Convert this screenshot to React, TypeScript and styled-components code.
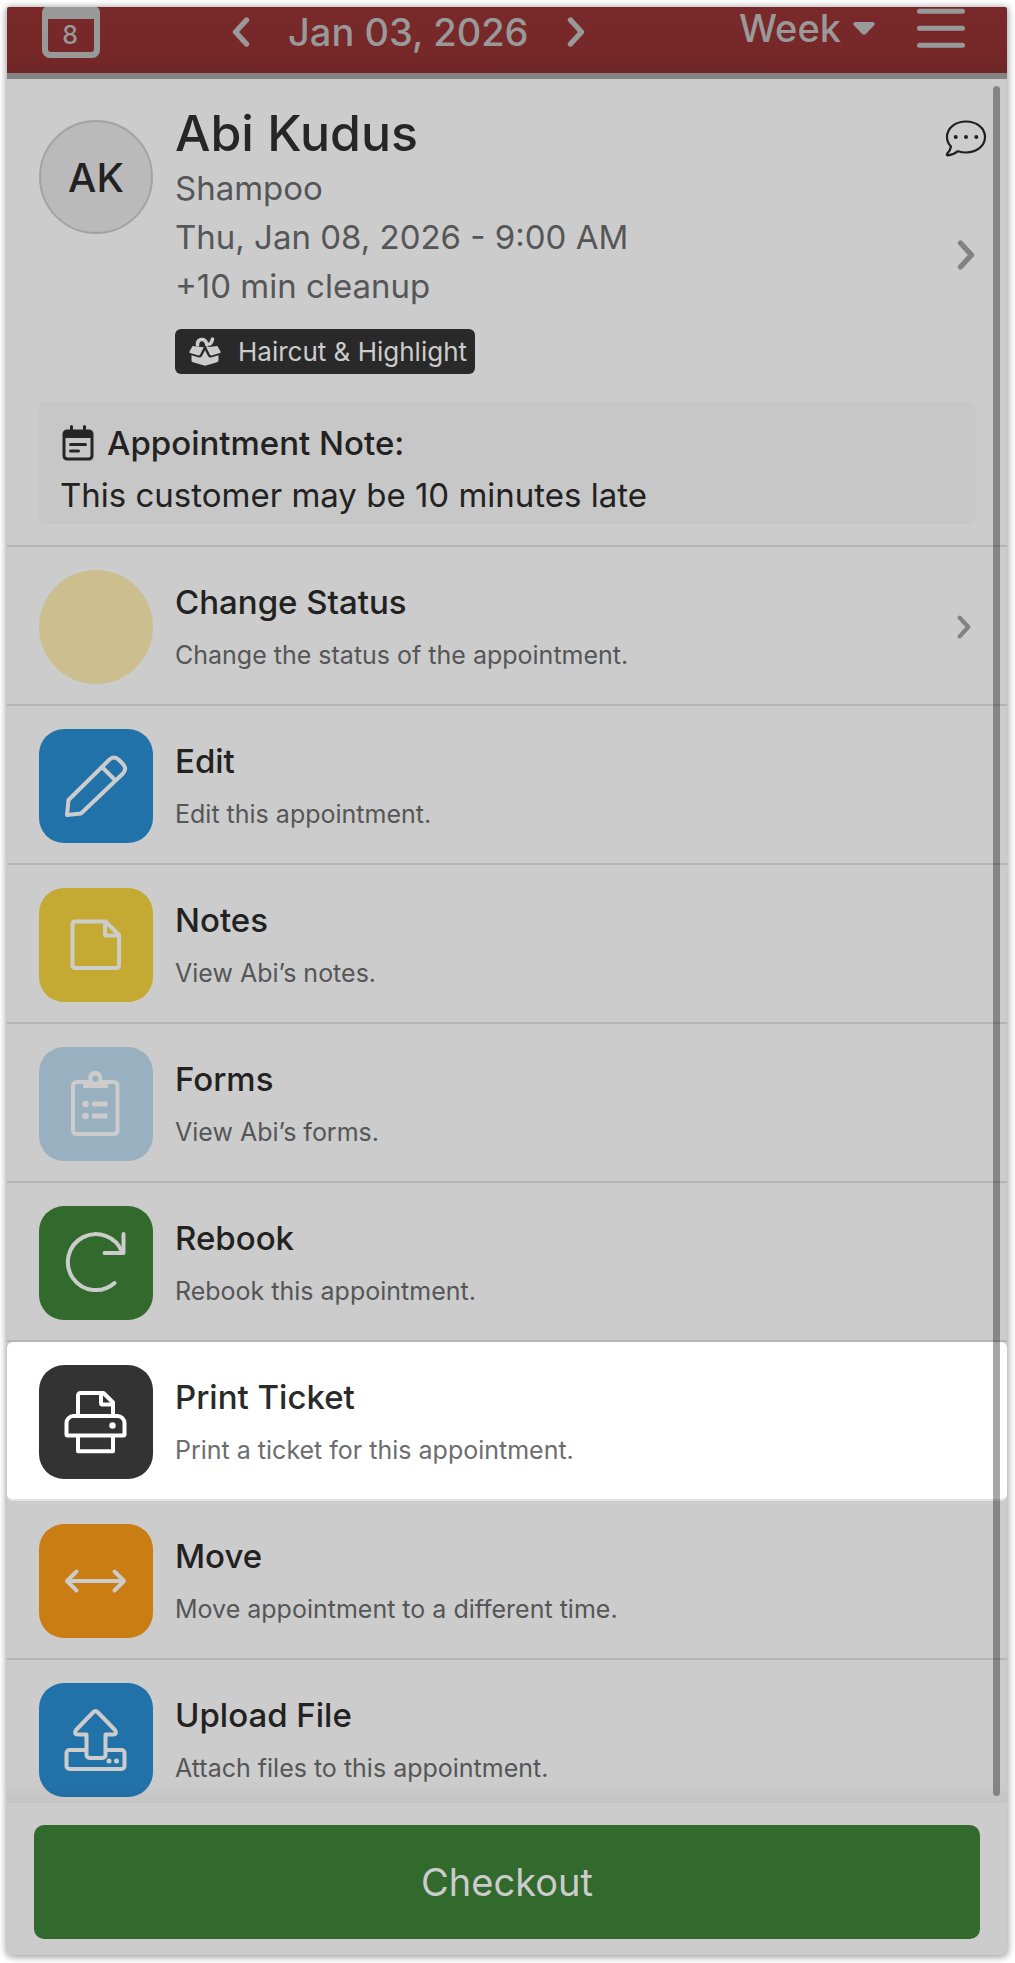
import React from "react";
import styled, { createGlobalStyle } from "styled-components";

const GlobalStyle = createGlobalStyle`
  *, *::before, *::after { box-sizing: border-box; }
  body {
    margin: 0;
    background: #ffffff;
    color: #222222;
    font-family: Inter, "Open Sans", "Liberation Sans", sans-serif;
    font-size: 33px;
    line-height: 49px;
  }
  h1, h2, p, ul { margin: 0; padding: 0; font: inherit; }
  svg { display: block; flex: none; }
`;

const ghostButton = `
  border: 0;
  padding: 0;
  margin: 0;
  background: none;
  color: inherit;
  font: inherit;
  cursor: pointer;
`;

const Frame = styled.div`
  position: relative;
  display: flex;
  flex-direction: column;
  margin: 7px 8px 8px 7px;
  background: #cccccc;
  border-radius: 2px 2px 6px 6px;
  box-shadow: 0 1px 7px 1px rgba(0, 0, 0, 0.4);
`;

const Header = styled.header`
  display: flex;
  align-items: flex-start;
  height: 72px;
  padding: 0 42px 0 35px;
  background: linear-gradient(#792929, #762828 70%, #6f2525);
  border-bottom: 6px solid #838383;
  border-radius: 2px 2px 0 0;
  color: #999999;
  font-size: 38px;
  font-weight: 500;
  line-height: 42px;
`;

const IconButton = styled.button`
  ${ghostButton}
  display: block;
`;

const DateNav = styled.nav`
  display: flex;
  align-items: center;
  gap: 38px;
  margin-left: 132px;
  padding-top: 4px;
`;

const HeaderRight = styled.div`
  display: flex;
  align-items: flex-start;
  gap: 42px;
  margin-left: auto;
`;

const WeekButton = styled.button`
  ${ghostButton}
  display: flex;
  align-items: center;
  gap: 12px;
`;

const Profile = styled.section`
  padding: 24px 31px 21px 32px;
  border-bottom: 2px solid #b5b5b5;
`;

const Person = styled.div`
  display: flex;
  align-items: flex-start;
  gap: 22px;
`;

const Avatar = styled.div`
  flex: none;
  display: grid;
  place-items: center;
  width: 114px;
  height: 114px;
  margin-top: 17px;
  border: 2px solid #a3a3a3;
  border-radius: 50%;
  background: #bababa;
  font-size: 40px;
  font-weight: 500;
`;

const PersonText = styled.div`
  flex: 1;
  min-width: 0;
  color: #555657;
`;

const Name = styled.h1`
  && {
    font-size: 50px;
    font-weight: 500;
    line-height: 61px;
  }
  color: #262626;
`;

const Package = styled.span`
  display: inline-flex;
  align-items: center;
  gap: 17px;
  height: 45px;
  margin-top: 18px;
  padding: 0 8px 0 14px;
  border-radius: 6px;
  background: #292929;
  color: #cccccc;
  font-size: 26px;
  line-height: 43px;
  vertical-align: top;
`;

const PersonActions = styled.div`
  display: flex;
  flex-direction: column;
  align-items: center;
  gap: 83px;
  padding-top: 17px;
  margin-right: -11px;
`;

const Note = styled.div`
  margin-top: 28px;
  padding: 15px 21px 3px;
  border-radius: 6px;
  background: #c7c7c7;
  line-height: 52px;
`;

const NoteTitle = styled.h2`
  display: flex;
  align-items: center;
  gap: 13px;
  && {
    padding-left: 2px;
    font-weight: 500;
  }
`;

const Actions = styled.ul`
  list-style: none;
`;

const ActionItem = styled.li<{ $active?: boolean }>`
  border-bottom: 2px solid ${(p) => (p.$active ? "#e2e2e2" : "#b5b5b5")};
  border-radius: ${(p) => (p.$active ? "6px" : "0")};
  background: ${(p) => (p.$active ? "#ffffff" : "transparent")};

  &:last-child {
    height: 143px;
    border-bottom: 0;
  }
`;

const ActionButton = styled.button`
  ${ghostButton}
  display: flex;
  align-items: center;
  gap: 22px;
  width: 100%;
  padding: 23px 36px 20px 32px;
  text-align: left;
`;

const Tile = styled.span<{ $color: string; $round?: boolean }>`
  flex: none;
  width: 114px;
  height: 114px;
  border-radius: ${(p) => (p.$round ? "50%" : "25px")};
  background: ${(p) => p.$color};
`;

const ActionText = styled.span`
  flex: 1;
  display: flex;
  flex-direction: column;
  padding-top: 2px;
`;

const ActionTitle = styled.span<{ $active?: boolean }>`
  color: ${(p) => (p.$active ? "#2a2a2a" : "#222222")};
  font-weight: 500;
  line-height: 54px;
`;

const ActionHint = styled.span<{ $active?: boolean }>`
  color: ${(p) => (p.$active ? "#6c6d6f" : "#555657")};
  font-size: 25px;
  line-height: 52px;
`;

const Footer = styled.footer`
  position: relative;
  padding: 22px 27px 16px;
  border-radius: 0 0 6px 6px;
  background: #cccccc;

  &::before {
    content: "";
    position: absolute;
    left: 0;
    right: 0;
    bottom: 100%;
    height: 24px;
    background: linear-gradient(rgba(0, 0, 0, 0), rgba(0, 0, 0, 0.04));
  }
`;

const Checkout = styled.button`
  ${ghostButton}
  display: block;
  width: 100%;
  height: 114px;
  border-radius: 10px;
  background: #32692d;
  color: #cccccc;
  font-size: 38px;
`;

const ScrollThumb = styled.div`
  position: absolute;
  top: 79px;
  right: 7px;
  bottom: 159px;
  width: 7px;
  border-radius: 4px;
  background: rgba(0, 0, 0, 0.35);
  pointer-events: none;
`;

function Chevron({ left, size = "large", color }: { left?: boolean; size?: "large" | "small"; color?: string }) {
  const large = size === "large";
  return (
    <svg width={large ? 18 : 14} height={large ? 30 : 24} viewBox="0 0 18 30" fill="none" aria-hidden="true">
      <path
        d={left ? "M14.5 3 3.5 15l11 12" : "M3.5 3l11 12-11 12"}
        stroke={color ?? "currentColor"}
        strokeWidth="5.4"
        strokeLinecap="round"
        strokeLinejoin="round"
      />
    </svg>
  );
}

function CalendarIcon() {
  return (
    <svg width="58" height="51" viewBox="0 0 58 51" aria-hidden="true">
      <path
        fill="#999999"
        fillRule="evenodd"
        d="M3 0H55Q58 2 58 6V43a8 8 0 0 1-8 8H8a8 8 0 0 1-8-8V6Q0 2 3 0ZM6 12V42a3 3 0 0 0 3 3H49a3 3 0 0 0 3-3V12Z"
      />
      <text x="28" y="37" textAnchor="middle" fontFamily="Inter, sans-serif" fontSize="25" fontWeight="500" fill="#999999">
        8
      </text>
    </svg>
  );
}

function MenuIcon() {
  return (
    <svg width="48" height="42" viewBox="0 0 48 42" aria-hidden="true">
      <path d="M2.5 4.3H45.5M2.5 21.3H45.5M2.5 38.3H45.5" stroke="#999999" strokeWidth="5" strokeLinecap="round" />
    </svg>
  );
}

function CaretIcon() {
  return (
    <svg width="22" height="13" viewBox="0 0 22 13" aria-hidden="true">
      <path d="M2 0H20Q23 1 21 3.4L13 11.8Q11 13.6 9 11.8L1 3.4Q-1 1 2 0Z" fill="#999999" />
    </svg>
  );
}

function ChatIcon() {
  return (
    <svg width="42" height="37" viewBox="0 0 42 37" fill="none" aria-hidden="true">
      <path
        d="M21 1.5C31.500 1.500 40 8 40 17S31.500 32.500 21 32.500Q17 32.500 13 31.200Q8.500 35 3 35.300Q1.300 35.300 2 34Q5.500 30 6 26.500Q2 22.500 2 17C2 8 10.500 1.500 21 1.500Z"
        stroke="#202020"
        strokeWidth="2.200"
        strokeLinejoin="round"
      />
      <g fill="#202020">
        <circle cx="10.700" cy="17" r="2" />
        <circle cx="21" cy="17" r="2" />
        <circle cx="31.300" cy="17" r="2" />
      </g>
    </svg>
  );
}

function PackageIcon() {
  return (
    <svg width="32" height="29" viewBox="0 0 32 29" fill="none" aria-hidden="true">
      <path d="M8.500 8V6.500A4.500 4.500 0 0 1 17 5L18 8M20.500 7Q22.500 6.500 23.500 2.200" stroke="#cccccc" strokeWidth="3.600" strokeLinecap="round" />
      <path d="M3.500 9 14.800 10.200 11 17.800Q10.500 18.700 9.500 18.400L1 16Q0 15.600.4 14.700Z" fill="#cccccc" />
      <path d="M28.500 9 17.200 10.200 21 17.800Q21.500 18.700 22.500 18.400L31 16Q32 15.600 31.600 14.700Z" fill="#cccccc" />
      <path d="M2.500 18.300 10 20.500Q12 20.800 13 19L16 13.300 19 19Q20 20.800 22 20.500L29.500 18.300V23.500Q29.500 24.800 28 25.300L16 28.800 4 25.300Q2.500 24.800 2.500 23.500Z" fill="#cccccc" />
    </svg>
  );
}

function NoteIcon() {
  return (
    <svg width="32" height="36" viewBox="0 0 32 36" fill="none" aria-hidden="true">
      <path d="M9.500 1.500V7M22.500 1.500V7" stroke="#262626" strokeWidth="3" strokeLinecap="round" />
      <path
        d="M5 4.500H27a4.500 4.500 0 0 1 4.500 4.500V31a4.500 4.500 0 0 1-4.500 4.500H5A4.500 4.500 0 0 1 .5 31V9A4.500 4.500 0 0 1 5 4.500ZM3.500 13V30.500a2 2 0 0 0 2 2H26.500a2 2 0 0 0 2-2V13Z"
        fill="#262626"
        fillRule="evenodd"
      />
      <path d="M8.500 19.500H23.500M8.500 26H16.500" stroke="#262626" strokeWidth="3" strokeLinecap="round" />
    </svg>
  );
}

const drawings: Record<string, React.ReactNode> = {
  edit: <path d="M28 86 29.500 71 70 31Q75 26 80 31L84 35Q88.500 40 83.500 45L42 84.500ZM63 38 75.500 50.500" />,
  notes: (
    <>
      <path d="M36 33.500H66.500L80 47V77.500a2.500 2.500 0 0 1-2.500 2.500H36a2.500 2.500 0 0 1-2.500-2.500V36A2.500 2.500 0 0 1 36 33.500Z" />
      <path d="M66 34V46a1.500 1.500 0 0 0 1.500 1.500H79.500" />
    </>
  ),
  forms: (
    <>
      <path d="M45 35H37.500a3.500 3.500 0 0 0-3.500 3.500V83.500a3.500 3.500 0 0 0 3.500 3.500H75a3.500 3.500 0 0 0 3.500-3.500V38.500a3.500 3.500 0 0 0-3.500-3.500H68" />
      <path d="M53 69H68.500M53 57H68.500" strokeWidth="4.800" strokeLinecap="butt" />
      <g fill="currentColor" stroke="none">
        <path
          fillRule="evenodd"
          d="M44 33H49.700A7 7 0 1 1 63 33H69V39.500a1.500 1.500 0 0 1-1.500 1.500H45.500a1.500 1.500 0 0 1-1.500-1.500ZM56.400 28.400a3.200 3.200 0 1 0 .1 0Z"
        />
        <circle cx="46.500" cy="57" r="3.300" />
        <circle cx="46.500" cy="69" r="3.300" />
      </g>
    </>
  ),
  rebook: (
    <>
      <path d="M75.500 77A28 28 0 1 1 83 46" />
      <path d="M84.500 28V47H65.500" />
    </>
  ),
  print: (
    <>
      <path d="M39 50V30.500a2.500 2.500 0 0 1 2.500-2.500H64.500L74 37.500V50" />
      <path d="M62 29V38a1.500 1.500 0 0 0 1.500 1.500H73.500" />
      <path d="M34.500 51H78.500a7 7 0 0 1 7 7V69.500a1 1 0 0 1-1 1H28.500a1 1 0 0 1-1-1V58a7 7 0 0 1 7-7Z" />
      <path d="M39 71V86.300H74V71" />
      <circle cx="73.500" cy="60.500" r="3.200" fill="currentColor" stroke="none" />
    </>
  ),
  move: <path d="M28 57H85M37.500 47.500 28 57 37.500 66.500M75.500 47.500 85 57 75.500 66.500" />,
  upload: (
    <>
      <path d="M54.500 29Q56.500 27 58.500 29L76 47Q78.500 51.500 74 51.500H66.500V72a3 3 0 0 1-3 3H50.500a3 3 0 0 1-3-3V51.500H39Q34.500 51.500 37 47Z" />
      <path d="M47 67H30.500a3 3 0 0 0-3 3V83a3 3 0 0 0 3 3H82.500a3 3 0 0 0 3-3V70a3 3 0 0 0-3-3H67" />
      <g fill="currentColor" stroke="none">
        <circle cx="70" cy="78" r="2.500" />
        <circle cx="77.500" cy="78" r="2.500" />
      </g>
    </>
  ),
};

function Drawing({ name, color }: { name: string; color: string }) {
  return (
    <svg
      width="114"
      height="114"
      viewBox="0 0 114 114"
      fill="none"
      stroke="currentColor"
      color={color}
      strokeWidth="4"
      strokeLinecap="round"
      strokeLinejoin="round"
      aria-hidden="true"
    >
      {drawings[name]}
    </svg>
  );
}

interface Action {
  title: string;
  hint: string;
  color: string;
  icon?: string;
  active?: boolean;
  chevron?: boolean;
}

const actions: Action[] = [
  { title: "Change Status", hint: "Change the status of the appointment.", color: "#ccbe8f", chevron: true },
  { title: "Edit", hint: "Edit this appointment.", color: "#2272aa", icon: "edit" },
  { title: "Notes", hint: "View Abi’s notes.", color: "#c4aa33", icon: "notes" },
  { title: "Forms", hint: "View Abi’s forms.", color: "#99b0c1", icon: "forms" },
  { title: "Rebook", hint: "Rebook this appointment.", color: "#32692d", icon: "rebook" },
  { title: "Print Ticket", hint: "Print a ticket for this appointment.", color: "#333333", icon: "print", active: true },
  { title: "Move", hint: "Move appointment to a different time.", color: "#ca7d13", icon: "move" },
  { title: "Upload File", hint: "Attach files to this appointment.", color: "#2272aa", icon: "upload" },
];

export default function App() {
  return (
    <>
      <GlobalStyle />
      <Frame>
        <Header>
          <IconButton aria-label="Today">
            <CalendarIcon />
          </IconButton>
          <DateNav aria-label="Date">
            <IconButton aria-label="Previous">
              <Chevron left />
            </IconButton>
            <span>Jan 03, 2026</span>
            <IconButton aria-label="Next">
              <Chevron />
            </IconButton>
          </DateNav>
          <HeaderRight>
            <WeekButton>
              Week
              <CaretIcon />
            </WeekButton>
            <IconButton aria-label="Menu">
              <MenuIcon />
            </IconButton>
          </HeaderRight>
        </Header>

        <main>
          <Profile>
            <Person>
              <Avatar>AK</Avatar>
              <PersonText>
                <Name>Abi Kudus</Name>
                <p>Shampoo</p>
                <p>Thu, Jan 08, 2026 - 9:00 AM</p>
                <p>+10 min cleanup</p>
                <Package>
                  <PackageIcon />
                  Haircut &amp; Highlight
                </Package>
              </PersonText>
              <PersonActions>
                <IconButton aria-label="Message">
                  <ChatIcon />
                </IconButton>
                <IconButton aria-label="Open client">
                  <Chevron color="#838383" />
                </IconButton>
              </PersonActions>
            </Person>
            <Note>
              <NoteTitle>
                <NoteIcon />
                Appointment Note:
              </NoteTitle>
              <p>This customer may be 10 minutes late</p>
            </Note>
          </Profile>

          <Actions>
            {actions.map((a) => (
              <ActionItem key={a.title} $active={a.active}>
                <ActionButton>
                  <Tile $color={a.color} $round={!a.icon}>
                    {a.icon && <Drawing name={a.icon} color={a.active ? "#ffffff" : "#cccccc"} />}
                  </Tile>
                  <ActionText>
                    <ActionTitle $active={a.active}>{a.title}</ActionTitle>
                    <ActionHint $active={a.active}>{a.hint}</ActionHint>
                  </ActionText>
                  {a.chevron && <Chevron size="small" color="#838383" />}
                </ActionButton>
              </ActionItem>
            ))}
          </Actions>
        </main>

        <Footer>
          <Checkout>Checkout</Checkout>
        </Footer>
        <ScrollThumb />
      </Frame>
    </>
  );
}
